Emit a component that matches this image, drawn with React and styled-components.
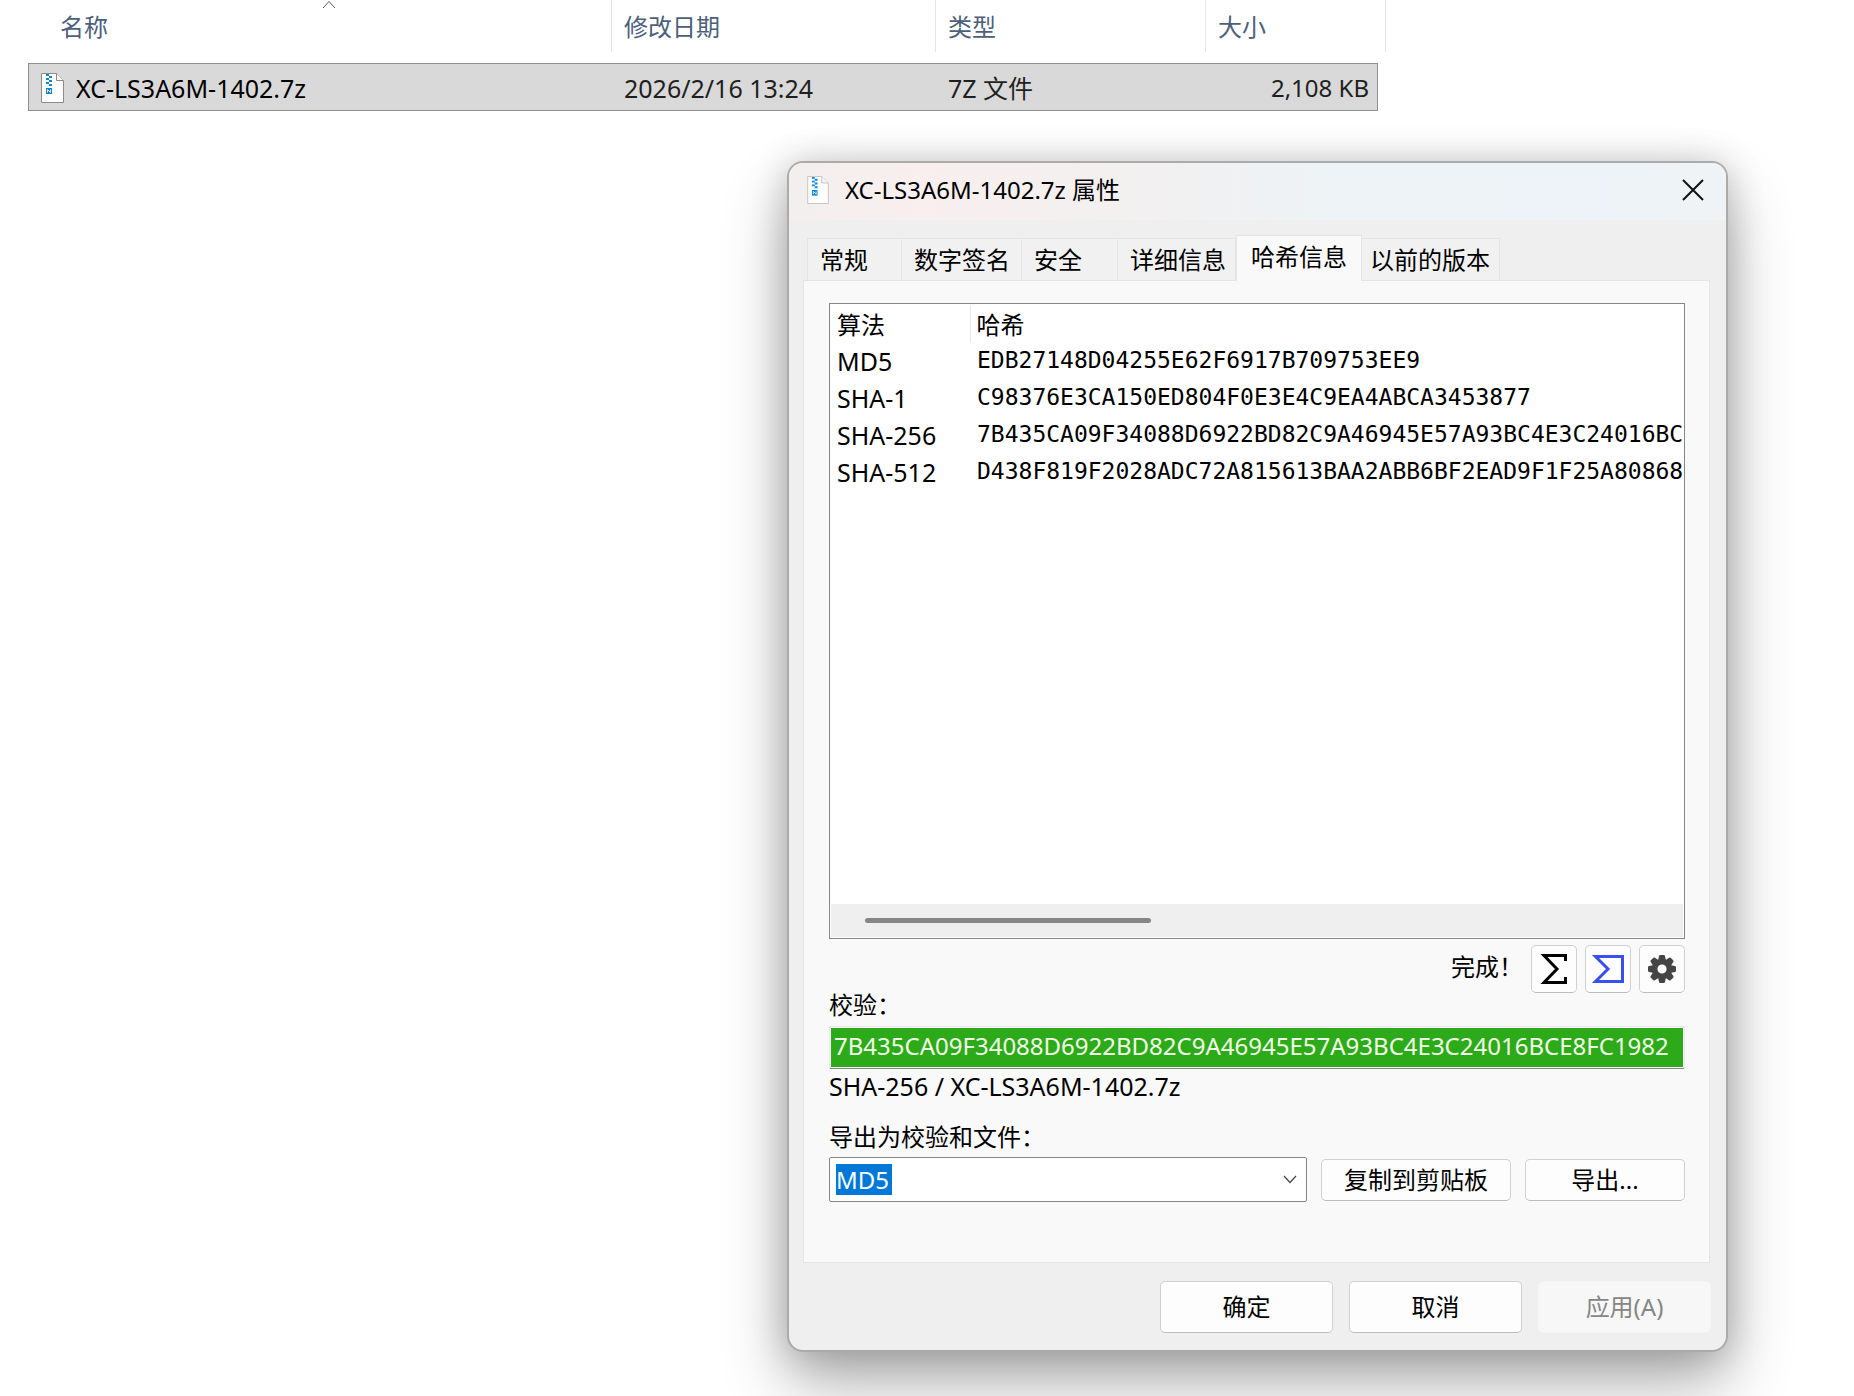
import { useState } from "react";
import styled, { createGlobalStyle } from "styled-components";

const Global = createGlobalStyle`
  * { box-sizing: border-box; }
  body {
    margin: 0; background: #fff; color: #000;
    font: 24px/32px "Noto Sans", "Noto Sans CJK SC", sans-serif;
  }
  button, input, select { font: inherit; color: inherit; margin: 0; }
`;

const Page = styled.main`min-height: 100vh; overflow: hidden; display: flex; flex-direction: column;`;

/* explorer list */
const Files = styled.table`
  width: calc(100% - 40px); max-width: 1358px; margin-left: 28px;
  table-layout: fixed; border-collapse: separate; border-spacing: 0; text-align: left;
`;
const Col = styled.col`width: ${p => p.$w}px;`;
const FileHead = styled.th`height: 63px; padding: 0; vertical-align: top; font-weight: 400; color: #4c607a;`;
const HeadInner = styled.div`
  height: 52px; padding-left: ${p => (p.$first ? 32 : 12)}px; border-right: 1px solid #e5e5e5;
  display: grid; grid-template-columns: 10fr 11fr; line-height: 53px; white-space: nowrap;
`;
const SortMark = styled.svg`width: 14px; height: 9px; justify-self: start;`;
const FileCell = styled.td`
  height: 48px; padding: 1px 8px 0 12px; background: #d9d9d9; color: #1f1f1f; font-size: 25px;
  border: solid #8f8f8f; border-width: 1px 0; text-align: ${p => p.$align || "left"};
  &:first-child { border-left-width: 1px; color: #000; }
  &:nth-child(4) { border-right-width: 1px; font-size: 24px; }
`;
const FileName = styled.div`display: flex; align-items: center; gap: 12px;`;

/* properties window */
const Desktop = styled.div`display: flex; justify-content: flex-end; padding: 50px 126px 45px 0;`;
const Window = styled.section`
  width: 100%; max-width: 941px; background: #efefef; border: 2px solid #ababab; border-radius: 16px;
  box-shadow: 0 32px 64px rgba(0,0,0,0.3), 0 2px 36px rgba(0,0,0,0.2);
`;
const TitleBar = styled.header`
  height: 57px; padding: 0 22px 4px 18px; display: flex; align-items: center; gap: 16px;
  border-radius: 14px 14px 0 0;
  background: linear-gradient(90deg, #f3efee 0%, #f8efee 14%, #f3f0f0 36%, #edf3f6 58%, #edf3f8 85%, #eff3f6 100%);
`;
const Title = styled.h1`margin: 0; flex: 1; font-size: 24px; font-weight: 400;`;
const Close = styled.button`
  width: 22px; height: 22px; padding: 0; border: none; background: none; display: grid; place-items: center;
`;
const Tabs = styled.div`display: flex; align-items: flex-end; height: 60px; padding-left: 18px;`;
const Tab = styled.button`
  flex: none; width: ${p => p.$w}px; height: ${p => (p.$on ? 46 : 42)}px;
  padding: 0 0 ${p => (p.$on ? 4 : 0)}px ${p => (p.$on ? 14 : p.$last ? 8 : 12)}px;
  border: 1px solid #e5e5e5; border-bottom: none; border-left-width: ${p => (p.$joined ? 0 : 1)}px;
  background: ${p => (p.$on ? "#f9f9f9" : "#f1f1f1")}; text-align: left; white-space: nowrap;
  margin-bottom: ${p => (p.$on ? -1 : 0)}px;
`;
const Panel = styled.div`
  margin: 0 16px 0 14px; padding: 22px 24px 60px 25px; background: #f9f9f9; border: 1px solid #e5e5e5;
`;

const List = styled.div`
  height: 636px; background: #fff; border: 1px solid #868686; padding: 1px;
  display: flex; flex-direction: column; overflow: hidden;
`;
const ListBody = styled.div`flex: 1; overflow: hidden;`;
const Hashes = styled.table`width: 100%; table-layout: fixed; border-collapse: collapse; text-align: left;`;
const HashHead = styled.th`
  height: 38px; padding: 2px 6px 0; font-weight: 400; line-height: 36px;
  &:first-child { border-right: 1px solid #e5e5e5; }
`;
const HashCell = styled.td`height: 37px; padding: 0 6px; font-size: 25px; line-height: 37px; white-space: nowrap; overflow: hidden;`;
const Digest = styled(HashCell)`
  padding: 0 0 3px 7px; line-height: 34px; font-family: "DejaVu Sans Mono", monospace; font-size: 23px;
`;
const Track = styled.div`height: 33px; padding: 14px 34px; background: #efefef;`;
const Thumb = styled.div`width: 286px; height: 5px; border-radius: 3px; background: #868686;`;

const Tools = styled.div`display: flex; align-items: flex-start; justify-content: flex-end; gap: 8px; margin-top: 6px; height: 48px;`;
const Status = styled.output`line-height: 44px;`;
const Button = styled.button`
  height: ${p => p.$h || 42}px; width: ${p => p.$w}px; padding: 0; flex: none;
  display: inline-flex; align-items: center; justify-content: center;
  background: #fdfdfd; border: 1px solid #d0d0d0; border-bottom-color: #bcbcbc; border-radius: 5px;
  &:disabled { background: #f7f7f7; border-color: #f4f4f4; color: #868686; }
`;
const Label = styled.label`display: block; line-height: 24px; margin: ${p => p.$top || 0}px 0 ${p => (p.$top ? 8 : 9)}px;`;
const Check = styled.input`
  display: block; width: 100%; height: 43px; padding: 0 4px 5px; outline: none; border-radius: 2px;
  border: 1px solid #e8e8e8; border-bottom-color: #868686; box-shadow: inset 0 0 0 1px #fff;
  background: #2daa19; color: #f2ffe8 !important;
`;
const Found = styled.p`margin: 0; font-size: 25px; line-height: 34px;`;
const Export = styled.div`display: flex; align-items: center; gap: 14px;`;
const Combo = styled.div`
  flex: 1; height: 45px; padding: 0 9px 0 6px; display: flex; align-items: center; justify-content: space-between;
  background: #fff; border: 1px solid #868686; border-radius: 2px;
`;
const Select = styled.select`
  appearance: none; width: 56px; height: 31px; padding: 0; border: none; border-radius: 0; outline: none;
  background: #0078d7; color: #fff !important; line-height: 31px;
`;
const Actions = styled.footer`display: flex; justify-content: flex-end; gap: 16px; padding: 18px 15px 17px;`;

const FileIcon = ({ edge = "#8b8b8b", blue = "#1683c4", ...size }) => (
  <svg width="23" height="30" viewBox="0 0 23 30" aria-hidden="true" {...size}>
    <path d="M.5.5h15l7 7v22H.5z" fill="#fff" stroke={edge} />
    <path d="M15.5.5v7h7" fill="#f5f5f5" stroke={edge} />
    <path d="M5 1h3v2H5zM8 3h3v2H8zM5 5h3v2H5zM8 7h3v2H8zM5 9h3v2H5zM8 11h3v2H8z" fill={blue} />
    <path d="M5 15h6v6H5z" fill={blue} />
    <path d="M6.500 19.500v-3l3 3v-3" fill="none" stroke="#d8f0ff" />
  </svg>
);

const Sigma = () => (
  <svg width="28" height="32" viewBox="0 0 28 32" aria-hidden="true">
    <path d="M25.500 8V2.500H4L17 16 4 29.500H25.500V24" fill="none" stroke="#000" strokeWidth="3" />
  </svg>
);

const SigmaClosed = () => (
  <svg width="34" height="30" viewBox="0 0 34 30" aria-hidden="true">
    <path d="M4.500 2.500H31.500V27.500H4.500L17 15z" fill="none" stroke="#3a50ee" strokeWidth="3" />
  </svg>
);

const Gear = () => (
  <svg width="28" height="28" viewBox="0 0 28 28" fill="#454545" aria-hidden="true">
    {[0, 45, 90, 135, 180, 225, 270, 315].map(a => (
      <path key={a} d="M10 6L11 1Q11.200 0 12.200 0h3.600Q16.800 0 17 1l1 5z" transform={`rotate(${a} 14 14)`} />
    ))}
    <path d="M14 4a10 10 0 1 0 0 20a10 10 0 1 0 0-20zM14 9.400a4.600 4.600 0 1 1 0 9.200a4.600 4.600 0 1 1 0-9.200z" fillRule="evenodd" />
  </svg>
);

const tabs = [
  { t: "常规", w: 95 },
  { t: "数字签名", w: 120 },
  { t: "安全", w: 96 },
  { t: "详细信息", w: 118 },
  { t: "哈希信息", w: 126 },
  { t: "以前的版本", w: 138 },
];

const hashes = [
  ["MD5", "EDB27148D04255E62F6917B709753EE9"],
  ["SHA-1", "C98376E3CA150ED804F0E3E4C9EA4ABCA3453877"],
  ["SHA-256", "7B435CA09F34088D6922BD82C9A46945E57A93BC4E3C24016BC"],
  ["SHA-512", "D438F819F2028ADC72A815613BAA2ABB6BF2EAD9F1F25A80868"],
];

export default function App() {
  const [tab, setTab] = useState(4);
  const [sum, setSum] = useState("7B435CA09F34088D6922BD82C9A46945E57A93BC4E3C24016BCE8FC1982");
  const [algo, setAlgo] = useState("MD5");

  return <>
    <Global />
    <Page lang="zh-CN">
      <Files>
        <colgroup><Col $w={584} /><Col $w={324} /><Col $w={270} /><Col $w={172} /><Col $w={8} /></colgroup>
        <thead>
          <tr>
            <FileHead>
              <HeadInner $first>
                名称
                <SortMark viewBox="0 0 14 9"><path d="M1 8l6-6.500L13 8" fill="none" stroke="#5a5a5a" /></SortMark>
              </HeadInner>
            </FileHead>
            <FileHead><HeadInner>修改日期</HeadInner></FileHead>
            <FileHead><HeadInner>类型</HeadInner></FileHead>
            <FileHead colSpan={2}><HeadInner>大小</HeadInner></FileHead>
          </tr>
        </thead>
        <tbody>
          <tr>
            <FileCell><FileName><FileIcon />XC-LS3A6M-1402.7z</FileName></FileCell>
            <FileCell>2026/2/16 13:24</FileCell>
            <FileCell>7Z 文件</FileCell>
            <FileCell $align="right">2,108 KB</FileCell>
          </tr>
        </tbody>
      </Files>

      <Desktop>
        <Window>
          <TitleBar>
            <FileIcon width={22} height={28} edge="#c2c2c2" blue="#0a84dc" />
            <Title>XC-LS3A6M-1402.7z 属性</Title>
            <Close aria-label="关闭">
              <svg width="22" height="22" viewBox="0 0 22 22"><path d="M1 1l20 20M21 1L1 21" stroke="#111" strokeWidth="2" /></svg>
            </Close>
          </TitleBar>

          <Tabs role="tablist">
            {tabs.map((t, i) => (
              <Tab key={t.t} role="tab" aria-selected={i === tab} $w={t.w} $on={i === tab} $joined={i > 0 && i !== tab}
                $last={i === tabs.length - 1} onClick={() => setTab(i)}>{t.t}</Tab>
            ))}
          </Tabs>

          <Panel role="tabpanel">
            <List>
              <ListBody>
                <Hashes>
                  <colgroup><Col $w={139} /><col /></colgroup>
                  <thead><tr><HashHead>算法</HashHead><HashHead>哈希</HashHead></tr></thead>
                  <tbody>
                    {hashes.map(([name, value]) => (
                      <tr key={name}><HashCell>{name}</HashCell><Digest>{value}</Digest></tr>
                    ))}
                  </tbody>
                </Hashes>
              </ListBody>
              <Track><Thumb /></Track>
            </List>

            <Tools>
              <Status>完成！</Status>
              <Button $w={46} $h={48} aria-label="计算"><Sigma /></Button>
              <Button $w={46} $h={48} aria-label="汇总"><SigmaClosed /></Button>
              <Button $w={46} $h={48} aria-label="设置"><Gear /></Button>
            </Tools>

            <Label htmlFor="check">校验：</Label>
            <Check id="check" value={sum} spellCheck={false} onChange={e => setSum(e.target.value)} />
            <Found>SHA-256 / XC-LS3A6M-1402.7z</Found>

            <Label htmlFor="algo" $top={22}>导出为校验和文件：</Label>
            <Export>
              <Combo>
                <Select id="algo" value={algo} onChange={e => setAlgo(e.target.value)}>
                  {hashes.map(([name]) => <option key={name}>{name}</option>)}
                </Select>
                <svg width="14" height="9" viewBox="0 0 14 9" aria-hidden="true"><path d="M1 1l6 6.500L13 1" fill="none" stroke="#444" strokeWidth="1.200" /></svg>
              </Combo>
              <Button $w={190}>复制到剪贴板</Button>
              <Button $w={160}>导出...</Button>
            </Export>
          </Panel>

          <Actions>
            <Button $w={173} $h={52}>确定</Button>
            <Button $w={173} $h={52}>取消</Button>
            <Button $w={173} $h={52} disabled>应用(A)</Button>
          </Actions>
        </Window>
      </Desktop>
    </Page>
  </>;
}
